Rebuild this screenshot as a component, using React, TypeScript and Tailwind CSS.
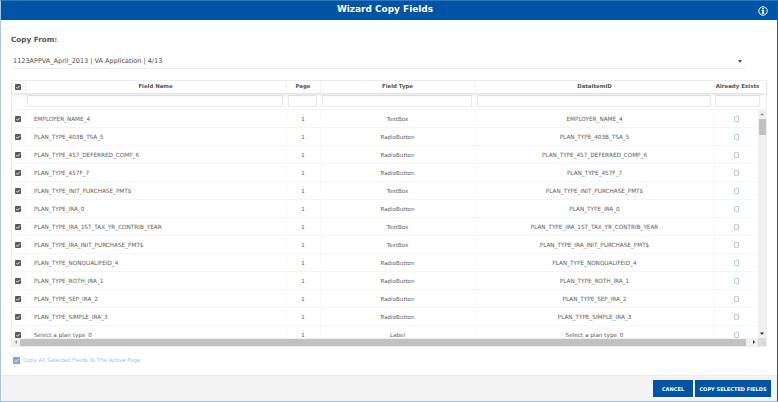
import React from "react";

type Row = { name: string; type: string };

const rows: Row[] = [
  { name: "EMPLOYER_NAME_4", type: "TextBox" },
  { name: "PLAN_TYPE_403B_TSA_5", type: "RadioButton" },
  { name: "PLAN_TYPE_457_DEFERRED_COMP_6", type: "RadioButton" },
  { name: "PLAN_TYPE_457F_7", type: "RadioButton" },
  { name: "PLAN_TYPE_INIT_PURCHASE_PMT$", type: "TextBox" },
  { name: "PLAN_TYPE_IRA_0", type: "RadioButton" },
  { name: "PLAN_TYPE_IRA_1ST_TAX_YR_CONTRIB_YEAR", type: "TextBox" },
  { name: "PLAN_TYPE_IRA_INIT_PURCHASE_PMT$", type: "TextBox" },
  { name: "PLAN_TYPE_NONQUALIFEID_4", type: "RadioButton" },
  { name: "PLAN_TYPE_ROTH_IRA_1", type: "RadioButton" },
  { name: "PLAN_TYPE_SEP_IRA_2", type: "RadioButton" },
  { name: "PLAN_TYPE_SIMPLE_IRA_3", type: "RadioButton" },
  { name: "Select a plan type_0", type: "Label" },
];

function Check() {
  return (
    <svg viewBox="0 0 12 12" className="block h-[6px] w-[6px] shrink-0">
      <rect width="12" height="12" rx="1.6" fill="#5a5a5a" />
      <path d="M2.6 6.2l2.4 2.4 4.6-5" fill="none" stroke="#fff" strokeWidth="1.8" />
    </svg>
  );
}

const grid = "grid grid-cols-[13px_261px_34px_155px_239px_1fr]";

function Arrow({ d, color }: { d: string; color: string }) {
  return (
    <svg viewBox="0 0 8 8" className="block h-[8px] w-[8px]">
      <path d={d} fill={color} />
    </svg>
  );
}

function FilterBox() {
  return <div className="h-[12px] rounded-[1px] border border-[#e9e9e9] bg-white" />;
}

export default function App() {
  return (
    <div className="flex h-[402px] w-[778px] flex-col overflow-hidden border-t border-r border-b border-l border-t-[#3277b5] border-r-[#2f5480] border-b-[#a3bcd6] border-l-[#a9c5e8] bg-white font-['DejaVu_Sans',Verdana,sans-serif] text-[#555]">
      <header className="grid h-[19px] shrink-0 grid-cols-[1fr_auto_1fr] items-center bg-[#0054a6] pr-[9px] pl-[1px]">
        <span />
        <h1 className="pb-[2px] text-[8.95px] leading-none font-bold whitespace-nowrap text-white">Wizard Copy Fields</h1>
        <svg viewBox="0 0 20 20" className="block h-[10px] w-[10px] justify-self-end">
          <circle cx="10" cy="10" r="8.4" fill="none" stroke="#fff" strokeWidth="2" />
          <path d="M8.3 4.2h3.4v2.6H8.3zM7.3 8.2h4.4v5.4h1.3v2H7.2v-2h1.3v-3.4H7.3z" fill="#fff" />
        </svg>
      </header>

      <main className="flex h-[355px] shrink-0 flex-col pr-[10px] pl-[10px]">
        <h2 className="mt-[15px] h-[10px] text-[7.25px] leading-[10px] font-bold">Copy From:</h2>
        <div className="mt-[9px] mr-[22px] ml-[2px] flex h-[15px] items-center justify-between border-b border-[#ededed] pr-[3px] text-[6.5px] leading-[13px] text-[#4c4c4c]">
          <span className="pt-px">1123APPVA_April_2013 | VA Application | 4/13</span>
          <svg viewBox="0 0 4 3" className="h-[3px] w-[4px]">
            <path d="M0 .3h4L2 2.6z" fill="#222" />
          </svg>
        </div>

        <section className="mt-[11px] flex h-[267px] flex-col border border-[#ededed]">
          <div className={`${grid} z-10 h-[12px] shrink-0 bg-white text-center text-[5.4px] leading-[11px] font-bold shadow-[0_2px_3px_0_rgba(0,0,0,0.12)]`}>
            <div className="flex items-center pl-[3px]">
              <Check />
            </div>
            <div className="border-l border-[#f2f2f2] pr-px">Field Name</div>
            <div className="border-l border-[#f2f2f2] pr-px">Page</div>
            <div className="border-l border-[#f2f2f2] pr-px">Field Type</div>
            <div className="border-l border-[#f2f2f2] pr-px">DataItemID</div>
            <div className="border-l border-[#f2f2f2] pr-[6px] text-[5.45px] whitespace-nowrap">Already Exists</div>
          </div>
          <div className={`${grid} h-[17px] shrink-0 border-b border-[#f4f4f4] pt-[2px]`}>
            <span />
            <div className="border-l border-[#fafafa] pr-[3px] pl-[1px]"><FilterBox /></div>
            <div className="border-l border-[#fafafa] pr-[3px] pl-[1px]"><FilterBox /></div>
            <div className="border-l border-[#fafafa] pr-[3px] pl-[1px]"><FilterBox /></div>
            <div className="border-l border-[#fafafa] pr-[3px] pl-[1px]"><FilterBox /></div>
            <div className="pr-[6px] pl-[1px]"><FilterBox /></div>
          </div>
          <div className="flex h-[228px] shrink-0 overflow-hidden">
            <div className="flex-1 text-[5.5px] leading-[19px] text-[#5c5c5c]">
              {rows.map((r) => (
                <div key={r.name} className={`${grid} h-[18px] grid-rows-[17px] border-b border-[#f5f5f5] text-center`}>
                  <div className="flex items-center pl-[3px]">
                    <Check />
                  </div>
                  <div className="border-l border-[#fafafa] pl-[8px] text-left text-[5.7px]">{r.name}</div>
                  <div className="border-l border-[#fafafa] pr-px">1</div>
                  <div className="border-l border-[#fafafa] pr-px">{r.type}</div>
                  <div className="border-l border-[#fafafa] pr-px text-[5.7px]">{r.name}</div>
                  <div className="flex items-center justify-center border-l border-[#fafafa] pt-[1px]">
                    <div className="h-[6px] w-[5px] rounded-[1px] border border-[#b3cdec] bg-white" />
                  </div>
                </div>
              ))}
            </div>
            <div className="flex w-[8px] shrink-0 flex-col bg-[#f0f0f0]">
              <Arrow d="M2 5.2h4L4 3z" color="#888" />
              <div className="mt-[1px] ml-[1px] h-[16px] w-[7px] bg-[#c1c1c1]" />
              <div className="mt-auto">
                <Arrow d="M2 2.6h4L4 5z" color="#333" />
              </div>
            </div>
          </div>
          <div className="flex h-[8px] shrink-0 items-center bg-[#f0f0f0]">
            <Arrow d="M5 2v4L3 4z" color="#888" />
            <div className="h-[7px] w-[726px] bg-[#c1c1c1]" />
            <div className="ml-[4px]">
              <Arrow d="M3 2v4l2-2z" color="#333" />
            </div>
            <div className="ml-auto h-[8px] w-[8px] bg-[#dcdcdc]" />
          </div>
        </section>

        <label className="mt-[9px] ml-[2px] flex h-[8px] items-center gap-[3px] text-[5.45px] leading-none text-[#a3c1e3]">
          <svg viewBox="0 0 14 14" className="block h-[7px] w-[7px]">
            <rect width="14" height="14" rx="1" fill="#7da9d8" />
            <path d="M2.8 7l3 3 5.6-5.8" fill="none" stroke="#fff" strokeWidth="1.7" />
          </svg>
          <span className="pt-[2px]">Copy All Selected Fields To The Active Page</span>
        </label>
      </main>

      <footer className="flex flex-1 items-center justify-end gap-[2px] border-t border-t-[#eaeaea] bg-[#f3f3f3] pr-[6px]">
        <button className="h-[17px] w-[40px] bg-[#0054a6] pt-px text-[5.05px] leading-[16px] font-bold text-white">CANCEL</button>
        <button className="h-[17px] w-[76px] bg-[#0054a6] pt-px text-[5.05px] leading-[16px] font-bold whitespace-nowrap text-white">COPY SELECTED FIELDS</button>
      </footer>
    </div>
  );
}
